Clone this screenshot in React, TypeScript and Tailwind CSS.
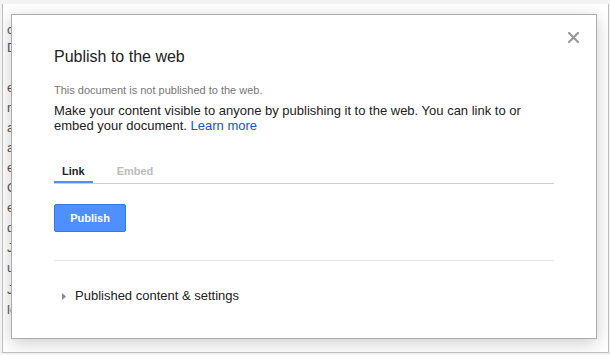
// fragments of the document behind the dialog, only their first pixels peek out
const backdropLines = [
  { text: "co", gap: "mt-[16px]" },
  { text: "Do", gap: "mt-[-2px]" },
  { text: "en", gap: "mt-[20px]" },
  { text: "na", gap: "mt-0" },
  { text: "as", gap: "mt-0" },
  { text: "as", gap: "mt-0" },
  { text: "ee", gap: "mt-0" },
  { text: "Oc", gap: "mt-0" },
  { text: "ec", gap: "mt-0" },
  { text: "di", gap: "mt-0" },
  { text: "Ju", gap: "mt-0" },
  { text: "ut", gap: "mt-0" },
  { text: "Ju", gap: "mt-[2px]" },
  { text: "lo", gap: "mt-0" },
];

function Backdrop() {
  return (
    <div className="flex flex-col pl-[4px] text-[13px] leading-[20px] text-[#555]">
      {backdropLines.map((l, i) => (
        <span key={i} className={l.gap}>
          {l.text}
        </span>
      ))}
    </div>
  );
}

function Tabs() {
  return (
    <div className="mt-[31px] flex border-b border-[#cfcfcf] text-[11px] font-bold leading-[14px]">
      <div className="border-b-2 border-[#4d90fe] px-2 pb-[3px] text-[#222]">Link</div>
      <div className="ml-[16px] border-b-2 border-transparent px-2 pb-[3px] text-[#bbb]">Embed</div>
    </div>
  );
}

function PublishDialog() {
  return (
    <div className="absolute left-[8px] top-[10px] h-[325px] w-[586px] border border-[#acacac] bg-white px-[42px] pt-[30px] shadow-[0_4px_16px_rgba(0,0,0,0.2)]">
      <button className="absolute right-[17px] top-[17px]">
        <svg width="11" height="11" viewBox="0 0 11 11" className="block">
          <path d="M1 1 L10 10 M10 1 L1 10" stroke="#999" strokeWidth="2.2" strokeLinecap="square" />
        </svg>
      </button>

      <h2 className="text-[16px] font-normal leading-[24px] text-[#222]">Publish to the web</h2>
      <p className="mt-[14px] text-[11px] leading-[14px] text-[#777]">
        This document is not published to the web.
      </p>
      <p className="mt-[6px] text-[13px] leading-[15px] text-[#222]">
        Make your content visible to anyone by publishing it to the web. You can link to or embed
        your document. <a className="text-[#15c]">Learn more</a>
      </p>

      <Tabs />

      <button className="mt-[20px] flex h-[28px] w-[72px] items-center justify-center rounded-[2px] border border-[#3079ed] bg-[#4d90fe] text-[11px] font-bold text-white">
        Publish
      </button>

      <div className="mt-[28px] border-t border-[#e5e5e5]" />

      <div className="mt-[27px] flex items-center text-[13px] leading-[15px] text-[#222]">
        <svg width="4" height="7" viewBox="0 0 4 7" className="ml-[8px] mr-[9px] mt-[1px]">
          <path d="M0 0 L4 3.5 L0 7 Z" fill="#8a8a8a" />
        </svg>
        Published content &amp; settings
      </div>
    </div>
  );
}

export default function App() {
  return (
    <div
      className="h-[355px] w-[610px] bg-[#f3f3f3] pl-[2px] pt-[4px]"
      style={{ fontFamily: '"Liberation Sans", Arial, sans-serif' }}
    >
      <div className="relative h-[349px] w-[607px] overflow-hidden border-x border-b border-[#bdbdbd] bg-white">
        <Backdrop />
        <PublishDialog />
      </div>
    </div>
  );
}
